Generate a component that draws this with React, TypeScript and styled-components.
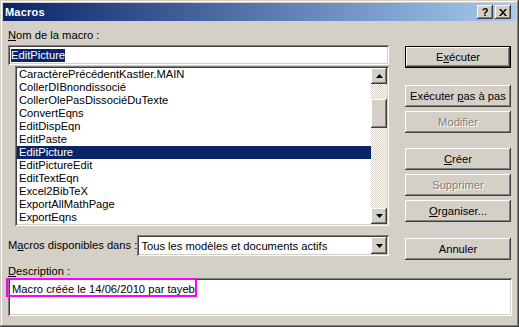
import React from "react";
import styled, { createGlobalStyle, css } from "styled-components";

const GlobalStyle = createGlobalStyle`
     html, body {
          margin: 0;
          padding: 0;
          background: #d4d0c8;
     }
     body {
          font-family: "Liberation Sans", Arial, sans-serif;
          font-size: 11.2px;
          color: #000;
     }
`

const raised = css`
     background: #d4d0c8;
     box-shadow: inset -1px -1px #404040, inset 1px 1px #ffffff, inset -2px -2px #808080, inset 2px 2px #d4d0c8;
`
const sunken = css`
     background: #ffffff;
     box-shadow: inset 1px 1px #808080, inset -1px -1px #ffffff, inset 2px 2px #404040, inset -2px -2px #d4d0c8;
`

const Window = styled.div`
     width: 519px;
     height: 327px;
     box-sizing: border-box;
     padding: 3px;
     background: #d4d0c8;
     box-shadow: inset -1px -1px #404040, inset 1px 1px #d4d0c8, inset -2px -2px #808080, inset 2px 2px #ffffff;
     display: flex;
     flex-direction: column;
`

const TitleBar = styled.div`
     height: 18px;
     display: flex;
     align-items: center;
     justify-content: space-between;
     padding: 0 5px 0 2px;
     background: linear-gradient(to right, #0a246a, #a6caf0);
`
const Title = styled.span`
     color: #fff;
     font-weight: bold;
     font-size: 11px;
     letter-spacing: 0.2px;
`
const CaptionButtons = styled.div`
     display: flex;
     gap: 2px;
`
const CaptionButton = styled.div`
     ${raised};
     width: 16px;
     height: 14px;
     display: flex;
     align-items: center;
     justify-content: center;
     font-weight: bold;
     font-size: 11px;
     line-height: 14px;
`

const Body = styled.div`
     flex: 1;
     padding: 8px 5px 0 5px;
     display: flex;
     flex-direction: column;
`
const Main = styled.div`
     display: flex;
     gap: 16px;
`
const LeftCol = styled.div`
     width: 381px;
     display: flex;
     flex-direction: column;
`
const RightCol = styled.div`
     width: 106px;
     padding-top: 17px;
     display: flex;
     flex-direction: column;
`

const Label = styled.div<{ $top?: number }>`
     height: 13px;
     line-height: 13px;
     margin-top: ${(p) => p.$top || 0}px;
     white-space: nowrap;
`
const Key = styled.span`
     text-decoration: underline;
`

const NameField = styled.div`
     ${sunken};
     margin-top: 3px;
     height: 20px;
     box-sizing: border-box;
     padding: 4px 3px 0 3px;
`
const SelectedText = styled.span`
     display: inline-block;
     background: #0a246a;
     color: #fff;
     height: 13px;
     line-height: 13px;
`

const ListBox = styled.div`
     ${sunken};
     margin: 1px 0 0 7px;
     width: 374px;
     height: 160px;
     box-sizing: border-box;
     padding: 2px;
     display: flex;
`
const Items = styled.div`
     flex: 1;
     display: flex;
     flex-direction: column;
     overflow: hidden;
`
const Item = styled.div<{ $selected?: boolean }>`
     height: 13px;
     line-height: 13px;
     padding-left: 2px;
     white-space: nowrap;
     flex-shrink: 0;
     ${(p) => p.$selected && css`
          background: #0a246a;
          color: #fff;
     `}
`
const ScrollBar = styled.div`
     width: 16px;
     display: flex;
     flex-direction: column;
     background: repeating-conic-gradient(#d4d0c8 0% 25%, #ffffff 0% 50%) 0 0 / 2px 2px;
`
const ArrowButton = styled.div`
     ${raised};
     width: 16px;
     height: 16px;
     flex-shrink: 0;
     display: flex;
     align-items: center;
     justify-content: center;
`
const Thumb = styled.div`
     ${raised};
     height: 29px;
     margin-top: 15px;
`
const Track = styled.div`
     flex: 1;
`

const SourceRow = styled.div`
     margin-top: 9px;
     display: flex;
     align-items: center;
`
const Select = styled.div`
     ${sunken};
     margin-left: auto;
     width: 255px;
     height: 21px;
     box-sizing: border-box;
     padding: 2px;
     display: flex;
     align-items: center;
`
const SelectText = styled.span`
     flex: 1;
     padding-left: 2px;
     white-space: nowrap;
`
const DropButton = styled(ArrowButton)`
     width: 16px;
     height: 17px;
`

const Button = styled.div<{ $top?: number; $default?: boolean; $disabled?: boolean }>`
     ${raised};
     height: 22px;
     box-sizing: border-box;
     margin-top: ${(p) => p.$top || 0}px;
     display: flex;
     align-items: center;
     justify-content: center;
     white-space: nowrap;
     ${(p) => p.$default && css`
          box-shadow: inset 0 0 0 1px #000, inset -2px -2px #404040, inset 2px 2px #ffffff, inset -3px -3px #808080;
     `}
     ${(p) => p.$disabled && css`
          color: #808080;
          text-shadow: 1px 1px 0 #ffffff;
     `}
`

const DescBox = styled.div`
     ${sunken};
     position: relative;
     height: 38px;
     margin-right: -1px;
     box-sizing: border-box;
     padding: 5px 4px 0 4px;
     line-height: 13px;
`
const Mark = styled.div`
     position: absolute;
     left: -2px;
     top: 0;
     width: 191px;
     height: 19px;
     box-sizing: border-box;
     border: 2px solid #ff00ff;
`

const UpArrow = () => (
     <svg width="7" height="4" viewBox="0 0 7 4"><polygon points="3.5,0 7,4 0,4" fill="#000" /></svg>
)
const DownArrow = () => (
     <svg width="7" height="4" viewBox="0 0 7 4"><polygon points="0,0 7,0 3.5,4" fill="#000" /></svg>
)
const CloseGlyph = () => (
     <svg width="8" height="7" viewBox="0 0 8 7">
          <path d="M0,0h2l2,2.5l2,-2.5h2l-3,3.5l3,3.5h-2l-2,-2.5l-2,2.5h-2l3,-3.5z" fill="#000" />
     </svg>
)

const macros = [
     "CaractèrePrécédentKastler.MAIN",
     "CollerDIBnondissocié",
     "CollerOlePasDissociéDuTexte",
     "ConvertEqns",
     "EditDispEqn",
     "EditPaste",
     "EditPicture",
     "EditPictureEdit",
     "EditTextEqn",
     "Excel2BibTeX",
     "ExportAllMathPage",
     "ExportEqns",
]

export default function App() {
     return (
          <>
               <GlobalStyle />
               <Window>
                    <TitleBar>
                         <Title>Macros</Title>
                         <CaptionButtons>
                              <CaptionButton>?</CaptionButton>
                              <CaptionButton><CloseGlyph /></CaptionButton>
                         </CaptionButtons>
                    </TitleBar>
                    <Body>
                         <Main>
                              <LeftCol>
                                   <Label><Key>N</Key>om de la macro :</Label>
                                   <NameField><SelectedText>EditPicture</SelectedText></NameField>
                                   <ListBox>
                                        <Items>
                                             {macros.map((m) => (
                                                  <Item key={m} $selected={m === "EditPicture"}>{m}</Item>
                                             ))}
                                        </Items>
                                        <ScrollBar>
                                             <ArrowButton><UpArrow /></ArrowButton>
                                             <Thumb />
                                             <Track />
                                             <ArrowButton><DownArrow /></ArrowButton>
                                        </ScrollBar>
                                   </ListBox>
                                   <SourceRow>
                                        <Label>M<Key>a</Key>cros disponibles dans :</Label>
                                        <Select>
                                             <SelectText>Tous les modèles et documents actifs</SelectText>
                                             <DropButton><DownArrow /></DropButton>
                                        </Select>
                                   </SourceRow>
                              </LeftCol>
                              <RightCol>
                                   <Button $default><span>E<Key>x</Key>écuter</span></Button>
                                   <Button $top={17}><span>Exécuter <Key>p</Key>as à pas</span></Button>
                                   <Button $top={4} $disabled><span>Modifier</span></Button>
                                   <Button $top={15}><span><Key>C</Key>réer</span></Button>
                                   <Button $top={4} $disabled><span>Supprimer</span></Button>
                                   <Button $top={4}><span><Key>O</Key>rganiser...</span></Button>
                                   <Button $top={16}><span>Annuler</span></Button>
                              </RightCol>
                         </Main>
                         <Label $top={5}><Key>D</Key>escription :</Label>
                         <DescBox>
                              Macro créée le 14/06/2010 par tayeb
                              <Mark />
                         </DescBox>
                    </Body>
               </Window>
          </>
     )
}
